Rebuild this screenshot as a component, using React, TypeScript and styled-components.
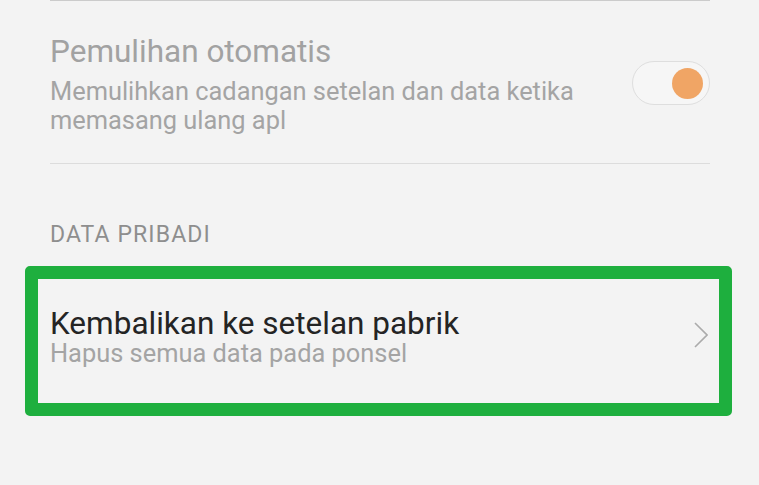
import styled, { createGlobalStyle } from "styled-components";

const GlobalStyle = createGlobalStyle`
  html, body {
    margin: 0;
    padding: 0;
    background: #f3f3f3;
  }
  body {
    font-family: Roboto, "Noto Sans", "Liberation Sans", sans-serif;
    -webkit-font-smoothing: antialiased;
  }
`;

const Page = styled.div`
  width: 759px;
  height: 485px;
  overflow: hidden;
  background: #f3f3f3;
  padding: 0 49px 0 50px;
  box-sizing: border-box;
`;

const Divider = styled.div<{ $tone?: string }>`
  height: 1px;
  background: ${(props) => props.$tone || "#dcdcdc"};
`;

const SettingRow = styled.div`
  display: flex;
  align-items: center;
  justify-content: space-between;
  padding: 32px 0 28px;
`;

const TextBlock = styled.div<{ $width?: number }>`
  display: flex;
  flex-direction: column;
  width: ${(props) => (props.$width ? `${props.$width}px` : "auto")};
`;

const Title = styled.div<{ $disabled?: boolean; $lh: number }>`
  font-size: 31.5px;
  line-height: ${(props) => props.$lh}px;
  color: ${(props) => (props.$disabled ? "#a2a2a2" : "#242424")};
`;

const Summary = styled.div<{ $lh: number; $mt?: number }>`
  font-size: 25.4px;
  line-height: ${(props) => props.$lh}px;
  color: #a4a4a4;
  margin-top: ${(props) => props.$mt || 0}px;
`;

const Toggle = styled.div`
  width: 78px;
  height: 44px;
  box-sizing: border-box;
  border: 1.5px solid #dedede;
  border-radius: 22px;
  background: #f6f6f6;
  display: flex;
  align-items: center;
  justify-content: flex-end;
  padding-right: 6px;
  margin-top: -2px;
`;

const Knob = styled.div`
  width: 31px;
  height: 31px;
  border-radius: 50%;
  background: #f0a565;
`;

const SectionLabel = styled.div`
  font-size: 23px;
  line-height: 24px;
  letter-spacing: 1.1px;
  color: #8e8e8e;
  margin-top: 59px;
`;

const Highlight = styled.div`
  margin: 19px -22px 0 -25px;
  border: 13px solid #1eaf3e;
  border-radius: 5px;
  display: flex;
  align-items: center;
  justify-content: space-between;
  padding: 28px 11px 36px 12px;
`;

const Chevron = () => (
  <svg width="14" height="26" viewBox="0 0 14 26" style={{ marginTop: -4 }}>
    <path d="M1 1 L13 13 L1 25" fill="none" stroke="#ababab" strokeWidth="1.6" />
  </svg>
);

export default function App() {
  return (
    <Page>
      <GlobalStyle />
      <Divider $tone="#cbcbcb" />
      <SettingRow>
        <TextBlock $width={560}>
          <Title $disabled $lh={38}>
            Pemulihan otomatis
          </Title>
          <Summary $lh={29} $mt={6}>
            Memulihkan cadangan setelan dan data ketika memasang ulang apl
          </Summary>
        </TextBlock>
        <Toggle>
          <Knob />
        </Toggle>
      </SettingRow>
      <Divider />
      <SectionLabel>DATA PRIBADI</SectionLabel>
      <Highlight>
        <TextBlock>
          <Title $lh={33}>Kembalikan ke setelan pabrik</Title>
          <Summary $lh={27}>Hapus semua data pada ponsel</Summary>
        </TextBlock>
        <Chevron />
      </Highlight>
    </Page>
  );
}
